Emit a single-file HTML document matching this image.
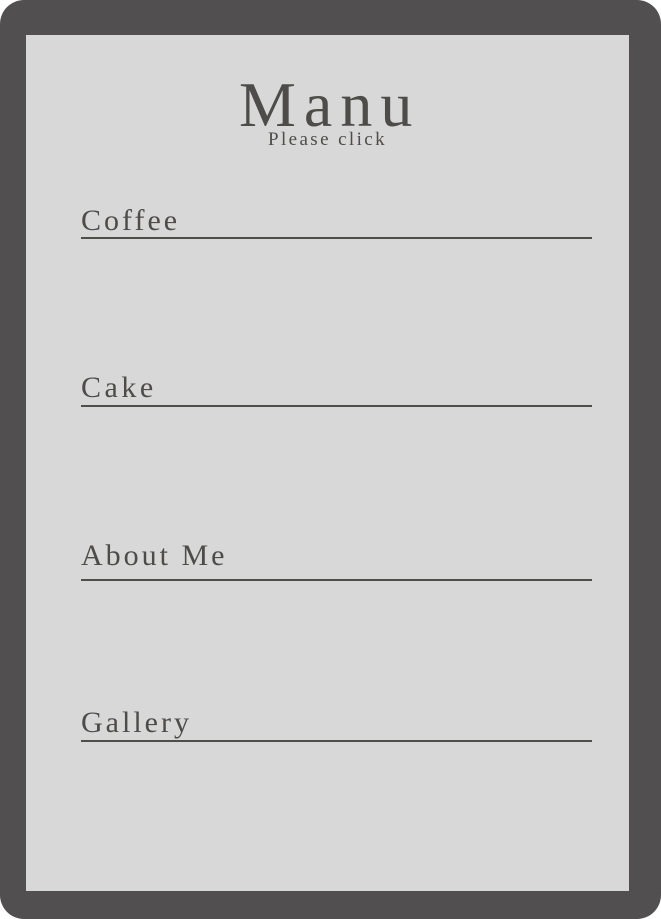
<!DOCTYPE html>
<html><head><meta charset="utf-8"><style>
html,body{margin:0;padding:0;width:661px;height:919px;overflow:hidden;background:#fff}
.frame{position:absolute;left:0;top:0;width:661px;height:919px;background:#514f50;border-radius:24px}
.inner{position:absolute;left:26px;top:35px;width:603px;height:856px;background:#d8d8d8}
.t{position:absolute;font-family:"Liberation Serif",serif;color:#4d4c49;white-space:nowrap;line-height:1}
.l{position:absolute;left:81px;width:511px;height:2px;background:#4f4e4b}
.m{font-size:30px;letter-spacing:3px}
</style></head><body>
<div class="frame"></div>
<div class="inner"></div>
<div class="t" style="left:239px;top:73px;font-size:64px;letter-spacing:8px">Manu</div>
<div class="t" style="left:268px;top:130px;font-size:19px;letter-spacing:2.4px">Please click</div>
<div class="t m" style="left:81px;top:206px">Coffee</div>
<div class="l" style="top:237px"></div>
<div class="t m" style="left:81px;top:373px;letter-spacing:3.5px">Cake</div>
<div class="l" style="top:405px"></div>
<div class="t m" style="left:81px;top:541px">About Me</div>
<div class="l" style="top:579px"></div>
<div class="t m" style="left:81px;top:708px">Gallery</div>
<div class="l" style="top:740px"></div>
</body></html>
